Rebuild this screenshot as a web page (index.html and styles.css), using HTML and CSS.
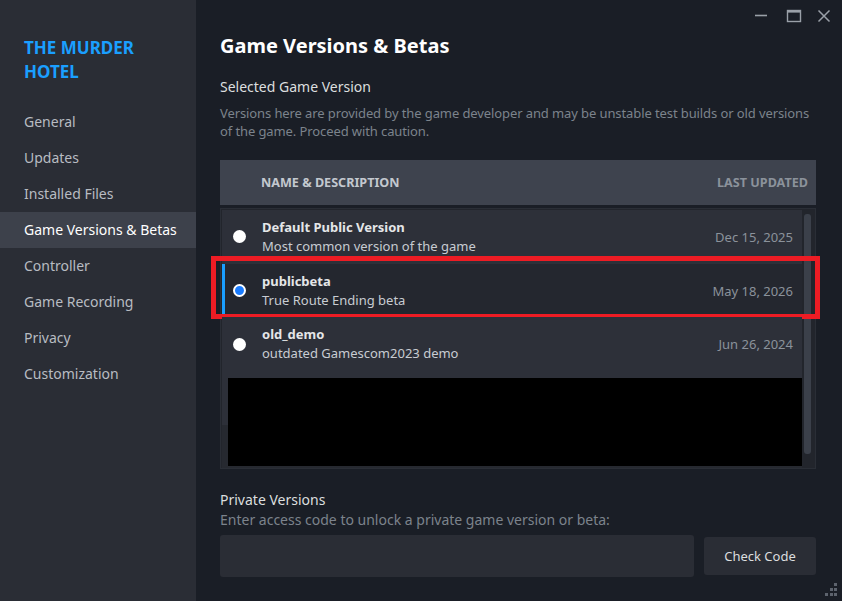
FILE: index.html
```html
<!DOCTYPE html>
<html lang="en">
<head>
    <meta charset="UTF-8">
    <meta name="viewport" content="width=device-width, initial-scale=1.0">
    <title>The Murder Hotel - Properties</title>
    <link rel="stylesheet" href="styles.css">
</head>
<body>
    <div class="window">
        <aside class="sidebar">
            <div class="game-title">THE MURDER HOTEL</div>
            <nav class="nav">
                <div class="nav-item">General</div>
                <div class="nav-item">Updates</div>
                <div class="nav-item">Installed Files</div>
                <div class="nav-item active">Game Versions &amp; Betas</div>
                <div class="nav-item">Controller</div>
                <div class="nav-item">Game Recording</div>
                <div class="nav-item">Privacy</div>
                <div class="nav-item">Customization</div>
            </nav>
        </aside>

        <main class="content">
            <div class="titlebar">
                <!-- window buttons -->
                <svg class="win-btn min" width="16" height="16" viewBox="0 0 16 16"><path d="M2 7.5h12" stroke="currentColor" stroke-width="1.6"/></svg>
                <svg class="win-btn" width="16" height="16" viewBox="0 0 16 16"><rect x="1.5" y="2.5" width="13" height="11" fill="none" stroke="currentColor" stroke-width="1.4"/><path d="M1.5 3.6h13" stroke="currentColor" stroke-width="2"/></svg>
                <svg class="win-btn" width="16" height="16" viewBox="0 0 16 16"><path d="M2.5 2.5l11 11M13.5 2.5l-11 11" stroke="currentColor" stroke-width="1.5"/></svg>
            </div>

            <h1 class="page-title">Game Versions &amp; Betas</h1>
            <div class="section-title">Selected Game Version</div>
            <p class="section-desc">Versions here are provided by the game developer and may be unstable test builds or old versions of the game. Proceed with caution.</p>

            <div class="table-head">
                <span>NAME &amp; DESCRIPTION</span>
                <span class="head-date">LAST UPDATED</span>
            </div>

            <div class="version-list">
                <div class="rows">
                    <div class="row">
                        <span class="radio"></span>
                        <div class="row-text">
                            <div class="row-name">Default Public Version</div>
                            <div class="row-desc">Most common version of the game</div>
                        </div>
                        <span class="row-date">Dec 15, 2025</span>
                    </div>
                    <div class="row selected">
                        <span class="radio checked"></span>
                        <div class="row-text">
                            <div class="row-name">publicbeta</div>
                            <div class="row-desc">True Route Ending beta</div>
                        </div>
                        <span class="row-date">May 18, 2026</span>
                        <div class="highlight"></div>
                    </div>
                    <div class="row">
                        <span class="radio"></span>
                        <div class="row-text">
                            <div class="row-name">old_demo</div>
                            <div class="row-desc">outdated Gamescom2023 demo</div>
                        </div>
                        <span class="row-date">Jun 26, 2024</span>
                    </div>
                    <div class="redacted">
                        <div class="redact-box"></div>
                    </div>
                </div>
                <div class="scrollbar"><div class="thumb"></div></div>
            </div>

            <div class="private-title">Private Versions</div>
            <div class="private-desc">Enter access code to unlock a private game version or beta:</div>
            <div class="code-row">
                <input class="code-input" type="text">
                <button class="code-btn">Check Code</button>
            </div>
        </main>
    </div>
    <div class="grip">
        <svg width="16" height="16" viewBox="0 0 16 16" fill="#5d636d">
            <rect x="12" y="1" width="3" height="3"/>
            <rect x="8" y="6" width="3" height="3"/><rect x="12" y="6" width="3" height="3"/>
            <rect x="3" y="11" width="3" height="3"/><rect x="8" y="11" width="3" height="3"/><rect x="12" y="11" width="3" height="3"/>
        </svg>
    </div>
</body>
</html>
```

FILE: styles.css
```css
* {
    margin: 0;
    padding: 0;
    box-sizing: border-box;
}

body {
    background-color: #1a1e26;
    font-family: 'Noto Sans', 'Open Sans', sans-serif;
    overflow: hidden;
}

.window {
    display: flex;
    width: 842px;
    height: 601px;
}

.sidebar {
    width: 196px;
    flex-shrink: 0;
    background-color: #2a2d35;
    padding-top: 36px;
}

.game-title {
    padding: 0 24px;
    color: #1a9fff;
    font-size: 17px;
    font-weight: bold;
    line-height: 24px;
    width: 170px;
}

.nav {
    margin-top: 20px;
}

.nav-item {
    height: 36px;
    line-height: 36px;
    padding-left: 24px;
    color: #b8bcc2;
    font-size: 14px;
}

.nav-item.active {
    background-color: #3d414b;
    color: #ffffff;
}

.content {
    flex: 1;
    padding: 0 26px 0 24px;
    display: flex;
    flex-direction: column;
}

.titlebar {
    height: 32px;
    display: flex;
    justify-content: flex-end;
    align-items: flex-start;
    gap: 14px;
    margin-right: -16px;
    padding-top: 8px;
    color: #9aa0a8;
}

.win-btn.min {
    margin-right: 3px;
}

.page-title {
    color: #ffffff;
    font-size: 20px;
    font-weight: bold;
    line-height: 28px;
}

.section-title {
    margin-top: 17px;
    color: #dcdedf;
    font-size: 14px;
    line-height: 20px;
}

.section-desc {
    margin-top: 7px;
    color: #7c838c;
    font-size: 13px;
    line-height: 18px;
    letter-spacing: -0.1px;
}

.table-head {
    margin-top: 20px;
    height: 45px;
    background-color: #3e434e;
    display: flex;
    align-items: center;
    justify-content: space-between;
    padding: 0 8px 0 41px;
    color: #c3c8cf;
    font-size: 12.6px;
    font-weight: bold;
}

.head-date {
    color: #8b929b;
}

.version-list {
    position: relative;
    margin-top: 3px;
    height: 261px;
    background-color: #22252c;
    border: 1px solid #2a2e36;
    display: flex;
    padding: 1px 0 0 1px;
}

.rows {
    flex: 1;
    display: flex;
    flex-direction: column;
}

.row {
    position: relative;
    height: 54px;
    background-color: #2d3039;
    display: flex;
    align-items: center;
    padding: 0 9px 0 8px;
    border-left: 3px solid transparent;
}

.row.selected {
    background-color: #24272f;
    border-left-color: #1a9fff;
}

.radio {
    width: 13px;
    height: 13px;
    border-radius: 50%;
    background-color: #ffffff;
    flex-shrink: 0;
}

.radio.checked {
    background-color: #1a7cff;
    border: 2px solid #ffffff;
}

.row-text {
    flex: 1;
    margin-left: 16px;
    font-size: 13px;
    line-height: 19px;
}

.row-name {
    color: #e4e6e8;
    font-weight: bold;
}

.row-desc {
    color: #c8ccd2;
}

.row-date {
    color: #8b929b;
    font-size: 13px;
}

.highlight {
    position: absolute;
    left: -14px;
    right: -18px;
    top: -8px;
    bottom: -2px;
    border: 5px solid #ed1c24;
}

.redacted {
    flex: 1;
    background: linear-gradient(#2d3039 0 54px, #262930 54px);
    padding: 7px 0 2px 6px;
}

.redact-box {
    height: 88px;
    background-color: #000000;
}

.scrollbar {
    width: 13px;
    padding: 4px 4px 14px 2px;
}

.thumb {
    height: 100%;
    background-color: #3b404a;
    border-radius: 3px;
}

.private-title {
    margin-top: 21px;
    color: #dcdedf;
    font-size: 14px;
    line-height: 20px;
}

.private-desc {
    color: #7c838c;
    font-size: 14px;
    line-height: 20px;
}

.code-row {
    margin-top: 5px;
    display: flex;
    align-items: center;
    gap: 10px;
}

.code-input {
    flex: 1;
    height: 42px;
    background-color: #2a2d35;
    border: none;
    border-radius: 3px;
    outline: none;
}

.code-btn {
    width: 112px;
    height: 38px;
    background-color: #2a2d35;
    border: none;
    border-radius: 3px;
    color: #dcdedf;
    font-family: inherit;
    font-size: 13px;
}

.grip {
    position: absolute;
    right: 4px;
    bottom: 3px;
    line-height: 0;
}
```
